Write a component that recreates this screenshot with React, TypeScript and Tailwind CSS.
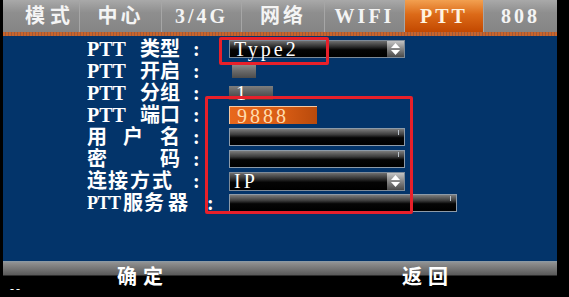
import React from 'react';

type Cell = [string, number, string?];

const tabs: { label: string; w: number; active?: boolean; pad?: string }[] = [
  { label: '模式', w: 76, pad: 'pl-[22px] tracking-[5px]' },
  { label: '中心', w: 82 },
  { label: '3/4G', w: 80 },
  { label: '网络', w: 83 },
  { label: 'WIFI', w: 80 },
  { label: 'PTT', w: 79, active: true },
  { label: '808', w: 74 },
];

// label pieces with fixed cell widths so the characters sit on the same columns as the OSD
const std = (a: string): Cell[] => [['PTT', 53], [a, 53]];

const Label = ({ cells }: { cells: Cell[] }) => (
  <div className="flex w-[142px] shrink-0 items-center text-[20px] font-bold leading-[22px] text-white">
    {cells.map(([t, w, cls], i) => (
      <span key={i} className={'inline-block overflow-hidden whitespace-nowrap ' + (cls ?? '')} style={{ width: w }}>
        {t}
      </span>
    ))}
    <span>:</span>
  </div>
);

// black bevelled input box
const TextBox = ({ w, h = 18, children }: { w: number; h?: number; children?: React.ReactNode }) => (
  <div
    className="relative flex items-center border border-[#8d9aa8] bg-[linear-gradient(to_bottom,#7c7c7c_0%,#3c3c3c_35%,#050505_55%,#000_100%)] pl-[5px] text-[20px] leading-none tracking-[3px] text-white"
    style={{ width: w, height: h }}
  >
    {children}
    <span className="absolute right-[5px] top-[1px] h-[5px] w-[1px] bg-[#b8c0c8]" />
  </div>
);

const Select = ({ value, h = 18 }: { value: string; h?: number }) => (
  <div
    className="flex w-[176px] items-stretch border border-[#7d8a98] bg-[linear-gradient(to_bottom,#6e6e6e_0%,#2e2e2e_35%,#050505_55%,#000_100%)]"
    style={{ height: h }}
  >
    <div className="flex flex-1 items-center pl-[4px] text-[20px] leading-none tracking-[3px] text-white">{value}</div>
    <div className="flex w-[17px] flex-col items-center justify-center gap-[2px] bg-[linear-gradient(to_bottom,#c4c4c4_0%,#8a8a8a_45%,#4a4a4a_100%)]">
      <svg width="9" height="5" viewBox="0 0 9 5">
        <polygon points="4.5,0 9,5 0,5" fill="#fff" />
      </svg>
      <svg width="9" height="5" viewBox="0 0 9 5">
        <polygon points="0,0 9,0 4.5,5" fill="#fff" />
      </svg>
    </div>
  </div>
);

const Row = ({ cells, children }: { cells: Cell[]; children: React.ReactNode }) => (
  <div className="flex h-[22px] items-center">
    <Label cells={cells} />
    {children}
  </div>
);

export default function App() {
  return (
    <div className="relative h-[297px] w-[569px] overflow-hidden bg-black font-['Liberation_Serif','Noto_Sans_CJK_SC',serif]">
      <div className="ml-[3px] flex w-[554px] flex-col">
        {/* tab strip */}
        <div className="flex h-[32px] bg-[linear-gradient(to_bottom,#a9a9a9_0%,#8e8e8e_40%,#858585_100%)]">
          {tabs.map((t, i) => (
            <div
              key={t.label}
              className={
                'flex h-full items-center text-[20px] font-bold ' +
                (t.pad ? t.pad + ' ' : 'justify-center tracking-[3px] ') +
                (i > 0 ? 'border-l border-[#a6a6a6] ' : '') +
                (t.active
                  ? 'bg-[linear-gradient(to_bottom,#f2a050_0%,#dc6a18_45%,#c24800_100%)] text-[#fff4e0]'
                  : 'text-[#f4f4f4]')
              }
              style={{ width: t.w }}
            >
              {t.label}
            </div>
          ))}
        </div>
        <div className="h-[4px] bg-[repeating-linear-gradient(to_right,#c8642c_0px,#c8642c_2px,#9c5a3c_2px,#9c5a3c_3px)]" />

        {/* settings panel */}
        <div className="flex h-[225px] flex-col bg-[#03346a] pl-[84px] pt-[2px]">
          <Row cells={std('类型')}>
            <Select value="Type2" />
          </Row>
          <Row cells={std('开启')}>
            <div className="ml-[3px] h-[14px] w-[24px] bg-[linear-gradient(to_bottom,#8e8e8e_0%,#6a6a6a_50%,#4c4c4c_100%)]" />
          </Row>
          <Row cells={std('分组')}>
            <div className="flex h-[14px] w-[44px] items-center bg-[linear-gradient(to_bottom,#7e7e7e_0%,#5c5c5c_50%,#3e3e3e_100%)] pl-[7px] text-[20px] leading-none text-white">
              1
            </div>
          </Row>
          <Row cells={std('端口')}>
            <div className="flex h-[18px] w-[88px] items-center border-l border-t border-[#f6c8a0] bg-[linear-gradient(to_right,#e8681c_0%,#d85c14_60%,#b84a0c_100%)] pl-[7px] text-[20px] leading-none tracking-[3px] text-[#ffdcae]">
              9888
            </div>
          </Row>
          <Row cells={[['用', 36], ['户', 37], ['名', 33]]}>
            <TextBox w={176} />
          </Row>
          <Row cells={[['密', 73], ['码', 33]]}>
            <TextBox w={176} />
          </Row>
          <Row cells={[['连', 21], ['接', 22], ['方', 22], ['式', 41]]}>
            <Select value="IP" h={19} />
          </Row>
          <Row cells={[['PTT', 36, 'text-[18px] tracking-[-0.5px]'], ['服', 21], ['务', 24], ['器', 39]]}>
            <TextBox w={228} />
          </Row>
        </div>

        {/* soft keys */}
        <div className="flex h-[36px] bg-[linear-gradient(to_bottom,#8c9ca8_0px,#8e8e8e_2px,#5a5a5a_14px,#000_15px,#000_100%)] pt-[6px] text-[20px] font-bold leading-[20px] text-white">
          <span className="ml-[114px] tracking-[6px]">确定</span>
          <span className="ml-[233px] tracking-[6px]">返回</span>
        </div>
      </div>

      <span className="absolute bottom-[2px] left-[10px] text-[12px] leading-none tracking-[2px] text-white">--</span>

      {/* red annotation frames */}
      <div className="absolute left-[219px] top-[37px] h-[28px] w-[110px] rounded-[2px] border-[3px] border-[#e8202a]" />
      <div className="absolute left-[205px] top-[96px] h-[118px] w-[208px] rounded-[2px] border-[3px] border-[#e8202a]" />
    </div>
  );
}
